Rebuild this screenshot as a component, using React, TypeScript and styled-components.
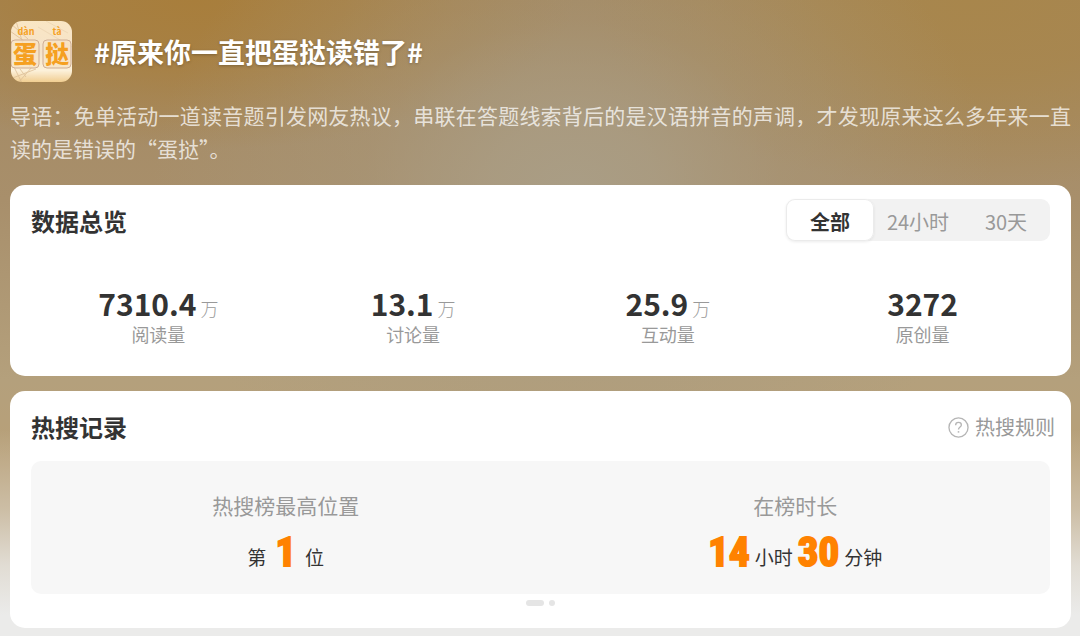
import React, { useState } from "react";
import styled, { createGlobalStyle, css } from "styled-components";

const GlobalStyle = createGlobalStyle`
  *, *::before, *::after { box-sizing: border-box; }
  body {
    margin: 0;
    background: #ebebea;
    font-family: "Noto Sans CJK SC", "Noto Sans", sans-serif;
    color: #333;
  }
  h1, h2, p, dl, dd, dt { margin: 0; }
  button { font-family: inherit; border: 0; cursor: pointer; }
`;

const Page = styled.main`
  min-height: 100vh;
  padding: 21px 9px 8px 10px;
  background:
    linear-gradient(180deg, rgba(235, 235, 234, 0) 430px, rgba(235, 235, 234, 0.4) 510px, rgba(235, 235, 234, 0.8) 565px, rgb(235, 235, 234) 615px),
    radial-gradient(ellipse 420px 340px at 53% 190px, rgba(170, 160, 138, 0.85) 0%, rgba(170, 159, 136, 0.75) 20%, rgba(168, 154, 128, 0.4) 50%, rgba(168, 150, 120, 0) 100%),
    radial-gradient(ellipse 380px 150px at 18% 0, rgb(168, 126, 60) 0%, rgba(168, 126, 60, 0.8) 40%, rgba(168, 130, 72, 0) 100%),
    radial-gradient(ellipse 380px 190px at 90% 0, rgb(168, 134, 76) 0%, rgba(168, 134, 76, 0.8) 40%, rgba(168, 138, 90, 0) 100%),
    linear-gradient(180deg, #a3875e 0, #a68c66 110px, #a88f6b 200px, #b4a07c 380px, #b8a078 460px);
`;

const Header = styled.header`
  display: flex;
  align-items: center;
  gap: 22px;
`;

const TopicIcon = styled.svg`
  flex: none;
  width: 62px;
  height: 62px;
  font-family: "Noto Sans CJK SC", sans-serif;
  font-weight: 700;
`;

const Title = styled.h1`
  font-size: 27px;
  line-height: 40px;
  font-weight: 700;
  color: #fff;
  text-shadow: 0 1px 3px rgba(0, 0, 0, 0.25);
`;

const Lead = styled.p`
  margin-top: 16px;
  font-size: 21px;
  line-height: 33px;
  color: rgba(255, 255, 255, 0.74);
  text-align: justify;
`;

const Card = styled.section`
  margin-top: 20px;
  padding: 14px 21px 29px;
  border-radius: 15px;
  background: #fff;

  & + & {
    margin-top: 15px;
    padding-bottom: 22px;
  }
`;

const CardHead = styled.div`
  display: flex;
  align-items: flex-start;
  justify-content: space-between;
  min-height: 44px;
`;

const CardTitle = styled.h2`
  font-size: 24px;
  line-height: 44px;
  font-weight: 700;
`;

const Tabs = styled.div`
  display: flex;
  height: 42px;
  border-radius: 9px;
  background: #f2f2f2;
`;

const Tab = styled.button<{ $active: boolean }>`
  width: 88px;
  padding: 4px 0 0;
  border-radius: 9px;
  background: transparent;
  font-size: 20px;
  line-height: 30px;
  color: #999;
  ${({ $active }) =>
    $active &&
    css`
      background: #fff;
      color: #333;
      font-weight: 700;
      box-shadow: inset 0 0 0 1px #ebebeb, 0 1px 3px rgba(0, 0, 0, 0.08);
    `}
`;

const Stats = styled.dl`
  display: grid;
  grid-template-columns: repeat(4, 1fr);
  padding-top: 42px;
`;

const Stat = styled.div`
  display: flex;
  flex-direction: column-reverse;
  justify-content: flex-end;
  align-items: center;
`;

const StatLabel = styled.dt`
  font-size: 18px;
  line-height: 26px;
  color: #999;
`;

const StatValue = styled.dd`
  font-size: 30px;
  line-height: 36px;
  font-weight: 700;
`;

const Unit = styled.span`
  margin-left: 4px;
  font-size: 18px;
  line-height: 18px;
  font-weight: 300;
  color: #999;
`;

const RulesLink = styled.a`
  display: flex;
  align-items: center;
  gap: 6px;
  margin-right: -5px;
  font-size: 20px;
  line-height: 44px;
  color: #999;
  text-decoration: none;
`;

const Records = styled.dl`
  display: grid;
  grid-template-columns: repeat(2, 1fr);
  margin-top: 12px;
  padding: 28px 0 12px;
  border-radius: 10px;
  background: #f7f7f7;
`;

const Record = styled.div`
  display: flex;
  flex-direction: column;
  align-items: center;
`;

const RecordLabel = styled.dt`
  font-size: 21px;
  line-height: 33px;
  color: #999;
`;

const RecordValue = styled.dd<{ $gap: number }>`
  display: flex;
  align-items: center;
  gap: ${({ $gap }) => $gap}px;
  height: 60px;
`;

const FigureUnit = styled.span`
  padding-top: 10px;
  font-size: 19px;
  line-height: 30px;
`;

const Figure = styled.strong`
  font-family: "Liberation Sans Narrow", "Roboto Condensed", "Liberation Sans", sans-serif;
  font-size: 41px;
  line-height: 60px;
  font-weight: 700;
  color: #ff8200;
  -webkit-text-stroke: 2px #ff8200;
`;

const Pager = styled.div`
  display: flex;
  justify-content: center;
  gap: 5px;
  margin-top: 6px;
`;

const Dot = styled.span<{ $active?: boolean }>`
  width: ${({ $active }) => ($active ? 18 : 6)}px;
  height: 6px;
  border-radius: 3px;
  background: #e5e5e5;
`;

const ranges = ["全部", "24小时", "30天"];

const stats = [
  { label: "阅读量", value: "7310.4", unit: "万" },
  { label: "讨论量", value: "13.1", unit: "万" },
  { label: "互动量", value: "25.9", unit: "万" },
  { label: "原创量", value: "3272", unit: "" },
];

function EggTartIcon() {
  return (
    <TopicIcon viewBox="0 0 62 62" role="img" aria-label="蛋挞">
      <defs>
        <linearGradient id="tile" x1="0" y1="0" x2="0" y2="1">
          <stop offset="0" stopColor="#fae6c4" />
          <stop offset="0.5" stopColor="#f5e3ca" />
          <stop offset="0.8" stopColor="#fcf1da" />
          <stop offset="1" stopColor="#f0cb8c" />
        </linearGradient>
        <clipPath id="tileClip">
          <rect x="1" width="61" height="61" rx="11" />
        </clipPath>
      </defs>
      <g clipPath="url(#tileClip)">
        <rect width="62" height="62" fill="url(#tile)" />
        <g fill="none" stroke="#d8b98f" strokeWidth="1" opacity="0.7">
          <path d="M0 2 L18 18 M0 10 L14 20 M6 0 L20 46 M0 58 L26 48 M10 48 L16 56 M22 46 L8 62 M4 46 L12 62" />
          <path d="M36 0 L58 12 M28 6 L62 26" opacity="0.4" />
        </g>
        <g fill="#f8e3c4" fillOpacity="0.8" stroke="#cfae95" strokeWidth="1">
          <rect x="1" y="19" width="28" height="28" rx="4" />
          <rect x="33" y="19" width="28" height="28" rx="4" />
        </g>
        <g fill="#f5a021" textAnchor="middle">
          <text x="16" y="14" fontSize="9">dàn</text>
          <text x="47" y="14" fontSize="9">tà</text>
          <text x="15" y="42" fontSize="24" fontWeight="900">蛋</text>
          <text x="47" y="42" fontSize="24" fontWeight="900">挞</text>
        </g>
      </g>
    </TopicIcon>
  );
}

function HelpIcon() {
  return (
    <svg width="21" height="21" viewBox="0 0 22 22" fill="none" stroke="#b5b5b5" aria-hidden="true">
      <circle cx="11" cy="11" r="10" strokeWidth="1.4" />
      <path d="M8 8.6 C8 6.8 9.3 5.7 11 5.7 C12.8 5.7 14 6.8 14 8.3 C14 10.4 11 10.6 11 13.2" strokeWidth="1.4" />
      <path d="M11 14.8 V16.4" strokeWidth="1.6" />
    </svg>
  );
}

export default function App() {
  const [range, setRange] = useState(ranges[0]);

  return (
    <>
      <GlobalStyle />
      <Page>
        <Header>
          <EggTartIcon />
          <Title>#原来你一直把蛋挞读错了#</Title>
        </Header>
        <Lead>
          导语：免单活动一道读音题引发网友热议，串联在答题线索背后的是汉语拼音的声调，才发现原来这么多年来一直读的是错误的“蛋挞”。
        </Lead>

        <Card>
          <CardHead>
            <CardTitle>数据总览</CardTitle>
            <Tabs>
              {ranges.map((name) => (
                <Tab
                  key={name}
                  type="button"
                  $active={name === range}
                  aria-pressed={name === range}
                  onClick={() => setRange(name)}
                >
                  {name}
                </Tab>
              ))}
            </Tabs>
          </CardHead>
          <Stats>
            {stats.map(({ label, value, unit }) => (
              <Stat key={label}>
                <StatLabel>{label}</StatLabel>
                <StatValue>
                  {value}
                  {unit && <Unit>{unit}</Unit>}
                </StatValue>
              </Stat>
            ))}
          </Stats>
        </Card>

        <Card>
          <CardHead>
            <CardTitle>热搜记录</CardTitle>
            <RulesLink href="#rules">
              <HelpIcon />
              热搜规则
            </RulesLink>
          </CardHead>
          <Records>
            <Record>
              <RecordLabel>热搜榜最高位置</RecordLabel>
              <RecordValue $gap={9}>
                <FigureUnit>第</FigureUnit>
                <Figure>1</Figure>
                <FigureUnit>位</FigureUnit>
              </RecordValue>
            </Record>
            <Record>
              <RecordLabel>在榜时长</RecordLabel>
              <RecordValue $gap={5}>
                <Figure>14</Figure>
                <FigureUnit>小时</FigureUnit>
                <Figure>30</Figure>
                <FigureUnit>分钟</FigureUnit>
              </RecordValue>
            </Record>
          </Records>
          <Pager aria-hidden="true">
            <Dot $active />
            <Dot />
          </Pager>
        </Card>
      </Page>
    </>
  );
}
